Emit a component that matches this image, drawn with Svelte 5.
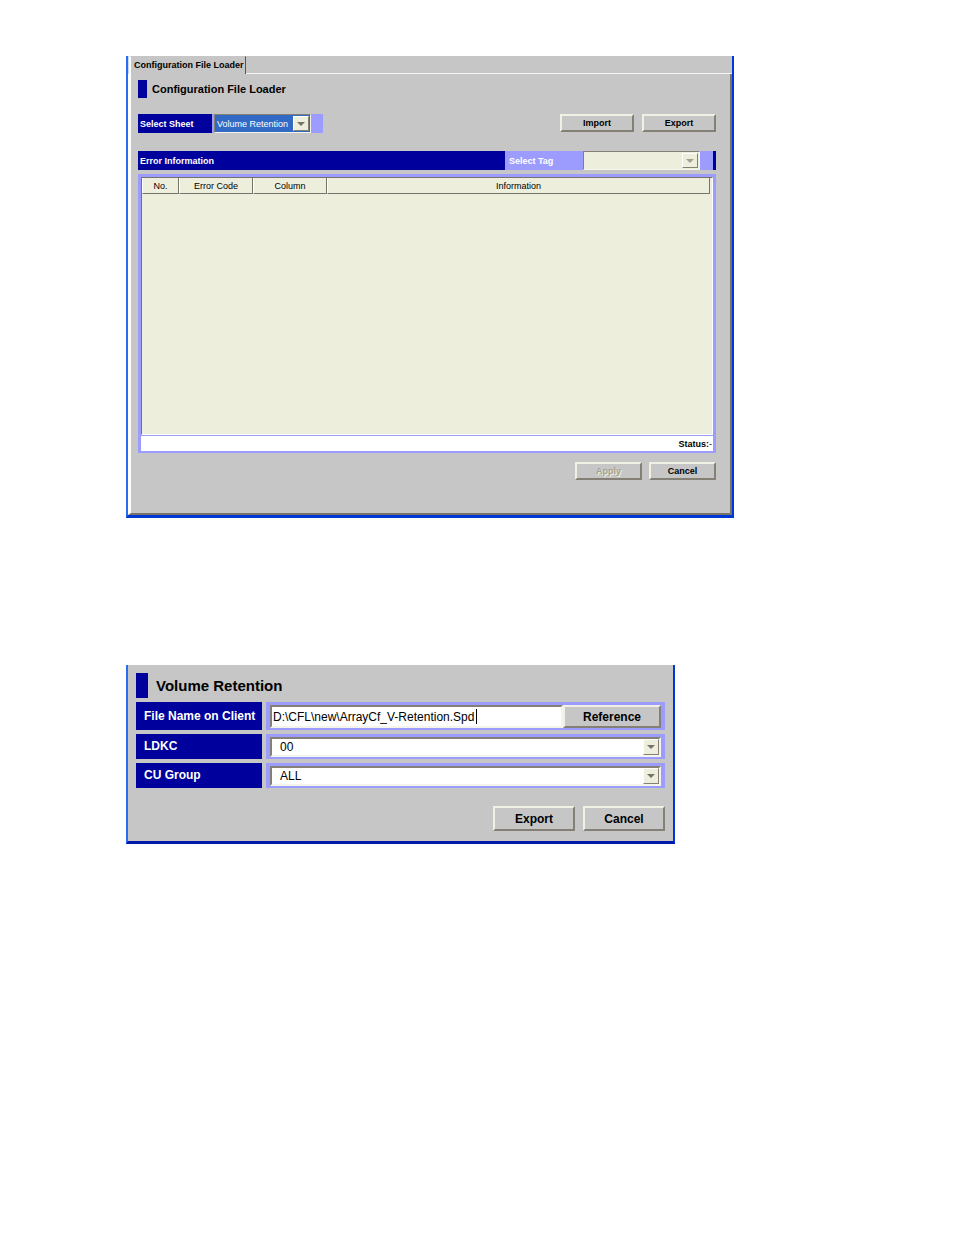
<script>
  /**
   * Configuration File Loader
   * Error list window and the Volume Retention export dialog
   */
  let sheet = 'Volume Retention';
  let fileName = 'D:\\CFL\\new\\ArrayCf_V-Retention.Spd';
  let ldkc = '00';
  let cuGroup = 'ALL';

  const columns = [
    { label: 'No.', width: '37px' },
    { label: 'Error Code', width: '74px' },
    { label: 'Column', width: '74px' },
    { label: 'Information', width: 'auto' }
  ];
</script>

{#snippet arrow()}
  <span class="arrow">
    <svg width="8" height="4" viewBox="0 0 8 4" aria-hidden="true">
      <path d="M0 0H8L4 4Z" fill="currentColor" />
    </svg>
  </span>
{/snippet}

<main>
  <section class="window">
    <div class="tabs">
      <button class="tab">Configuration File Loader</button>
      <div class="tab-rest"></div>
    </div>

    <div class="panel">
      <h1 class="title">Configuration File Loader</h1>

      <div class="sheet-row">
        <label class="caption" for="sheet">Select Sheet</label>
        <div class="sheet-field">
          <div class="combo sheet-combo">
            <select id="sheet" bind:value={sheet}>
              <option>Volume Retention</option>
            </select>
            {@render arrow()}
          </div>
        </div>
        <div class="actions">
          <button class="btn wide">Import</button>
          <button class="btn wide">Export</button>
        </div>
      </div>

      <div class="error-bar">
        <h2>Error Information</h2>
        <div class="tag-field">
          <label for="tag">Select Tag</label>
          <div class="combo tag-combo">
            <select id="tag" disabled></select>
            {@render arrow()}
          </div>
        </div>
      </div>

      <div class="error-box">
        <div class="table-area">
          <table>
            <thead>
              <tr>
                {#each columns as col}
                  <th style="width: {col.width}">{col.label}</th>
                {/each}
              </tr>
            </thead>
            <tbody></tbody>
          </table>
        </div>
        <div class="status">Status:<span>-</span></div>
      </div>

      <div class="actions footer">
        <button class="btn" disabled>Apply</button>
        <button class="btn">Cancel</button>
      </div>
    </div>
  </section>

  <section class="window dialog">
    <h1 class="title">Volume Retention</h1>

    <div class="form">
      <label class="name tall" for="file">File Name on Client</label>
      <div class="value tall">
        <div class="file">
          <input id="file" type="text" bind:value={fileName} />
          <span class="caret"></span>
        </div>
        <button class="btn reference">Reference</button>
      </div>

      <label class="name" for="ldkc">LDKC</label>
      <div class="value">
        <div class="combo">
          <select id="ldkc" bind:value={ldkc}>
            <option>00</option>
          </select>
          {@render arrow()}
        </div>
      </div>

      <label class="name" for="cu">CU Group</label>
      <div class="value">
        <div class="combo">
          <select id="cu" bind:value={cuGroup}>
            <option>ALL</option>
          </select>
          {@render arrow()}
        </div>
      </div>
    </div>

    <div class="actions">
      <button class="btn">Export</button>
      <button class="btn">Cancel</button>
    </div>
  </section>
</main>

<style>
  :global(body) {
    background: #fff;
  }

  main {
    padding: 56px 220px 56px 126px;
    font-family: 'Liberation Sans', Arial, sans-serif;
    font-size: 9px;
    color: #000;
  }

  main :global(*) {
    box-sizing: border-box;
  }

  h1,
  h2 {
    margin: 0;
  }

  button,
  input,
  select {
    margin: 0;
    border-radius: 0;
    font-family: inherit;
    font-size: inherit;
    color: inherit;
  }

  .window {
    background: #c6c6c6;
    border: 2px solid #0038d8;
    border-top: 0;
    border-left-color: #2a6cf0;
  }

  /* tab strip */
  .tabs {
    display: flex;
    height: 18px;
    border-left: 1px solid #c6d8f8;
  }

  .tab {
    padding: 0 1px 1px 3px;
    background: #c6c6c6;
    border: 0;
    border-left: 2px solid #fff;
    border-top: 1px solid #c6c6c6;
    border-right: 1px solid #555;
    font-weight: bold;
    white-space: nowrap;
  }

  .tab-rest {
    flex: 1;
    border-bottom: 1px solid #f4f4f4;
  }

  .panel {
    padding: 6px 14px 33px 7px;
    border-left: 3px solid #fff;
    border-right: 2px solid #77736a;
    border-bottom: 2px solid #77736a;
  }

  .title {
    display: flex;
    align-items: center;
    gap: 5px;
    height: 18px;
    font-size: 11px;
  }

  .title::before {
    content: '';
    width: 9px;
    height: 100%;
    background: #00009c;
  }

  .sheet-row {
    display: flex;
    height: 19px;
    margin-top: 16px;
  }

  .caption {
    width: 74px;
    padding-left: 2px;
    background: #00009c;
    color: #fff;
    font-weight: bold;
    line-height: 21px;
  }

  .sheet-field {
    width: 111px;
    padding-left: 2px;
    background: #9c9cff;
  }

  .combo {
    position: relative;
    flex: 1;
    height: 100%;
  }

  .combo select {
    display: block;
    width: 100%;
    height: 100%;
    padding: 0 18px 0 8px;
    appearance: none;
    background: #fff;
    border: 2px solid #848075;
    border-right-color: #f4f4ea;
    border-bottom-color: #f4f4ea;
    opacity: 1;
  }

  .arrow {
    position: absolute;
    top: 2px;
    right: 2px;
    bottom: 2px;
    width: 16px;
    display: flex;
    align-items: center;
    justify-content: center;
    background: #eeeedd;
    border: 1px solid #fff;
    border-right-color: #848075;
    border-bottom-color: #848075;
    color: #77736a;
    pointer-events: none;
  }

  .sheet-combo {
    width: 97px;
  }

  .sheet-combo select {
    padding-left: 2px;
    background: #316ac5;
    border-width: 1px;
    color: #fff;
  }

  .actions {
    display: flex;
    justify-content: flex-end;
    gap: 8px;
    margin-left: auto;
  }

  .btn {
    width: 67px;
    height: 18px;
    padding: 0;
    background: #c6c6c6;
    border: 2px solid #f0f0e4;
    border-right-color: #848075;
    border-bottom-color: #848075;
    font-weight: bold;
  }

  .btn.wide {
    width: 74px;
  }

  .btn:disabled {
    color: #a5a18f;
    text-shadow: 1px 1px #eeeedd;
  }

  .error-bar {
    display: flex;
    height: 19px;
    margin-top: 18px;
    padding-right: 3px;
    background: #00009c;
    color: #fff;
    font-weight: bold;
    line-height: 21px;
  }

  .error-bar h2 {
    flex: 1;
    padding-left: 2px;
    font-size: 9px;
  }

  .tag-field {
    display: flex;
    width: 208px;
    padding: 0 13px 0 4px;
    background: #9c9cff;
  }

  .tag-field label {
    width: 74px;
  }

  .tag-combo select {
    background: #eeeedd;
    border-width: 1px;
  }

  .tag-combo .arrow {
    color: #a5a18f;
  }

  .error-box {
    margin-top: 4px;
    border: 3px solid #9c9cff;
    border-bottom-width: 2px;
  }

  .table-area {
    height: 258px;
    padding-right: 2px;
    background: #eeeedd;
    border: 1px solid #77736a;
    border-right-color: #fff;
    border-bottom-color: #fff;
  }

  table {
    width: 100%;
    table-layout: fixed;
    border-collapse: separate;
    border-spacing: 0;
  }

  th {
    height: 16px;
    padding: 0;
    border: 1px solid #fff;
    border-top: 0;
    border-right-color: #77736a;
    border-bottom-color: #77736a;
    font-weight: normal;
  }

  .status {
    height: 16px;
    padding-right: 1px;
    background: #fff;
    border-top: 1px solid #9c9cff;
    font-weight: bold;
    line-height: 16px;
    text-align: right;
  }

  .status span {
    font-weight: normal;
  }

  .footer {
    gap: 7px;
    margin-top: 9px;
  }

  .window:first-child {
    border-bottom-width: 3px;
  }

  /* export dialog */
  .dialog {
    margin: 147px 59px 0 0;
    padding: 8px 8px 10px;
    border-bottom-width: 3px;
    border-bottom-color: #0018a8;
    font-size: 12px;
  }

  .dialog .title {
    gap: 8px;
    height: 25px;
    font-size: 15px;
  }

  .dialog .title::before {
    width: 12px;
  }

  .form {
    display: grid;
    grid-template-columns: 126px 1fr;
    gap: 4px;
    margin-top: 4px;
  }

  .name {
    height: 25px;
    padding-left: 8px;
    background: #00009c;
    color: #fff;
    font-weight: bold;
    line-height: 24px;
  }

  .value {
    display: flex;
    height: 25px;
    padding: 3px 4px 2px;
    background: #9c9cff;
  }

  .tall {
    height: 28px;
    line-height: 29px;
  }

  .file {
    position: relative;
    flex: 1;
  }

  .file input {
    display: block;
    width: 100%;
    height: 100%;
    padding: 0 1px;
    background: #fff;
    border: 2px solid #848075;
    border-right-color: #f4f4ea;
    border-bottom-color: #f4f4ea;
  }

  .caret {
    position: absolute;
    top: 4px;
    bottom: 4px;
    left: 206px;
    width: 1px;
    background: #000;
  }

  .dialog .btn {
    width: 82px;
    height: 25px;
  }

  .dialog .btn.reference {
    width: 98px;
    height: 23px;
  }

  .dialog .actions {
    margin-top: 18px;
  }
</style>
